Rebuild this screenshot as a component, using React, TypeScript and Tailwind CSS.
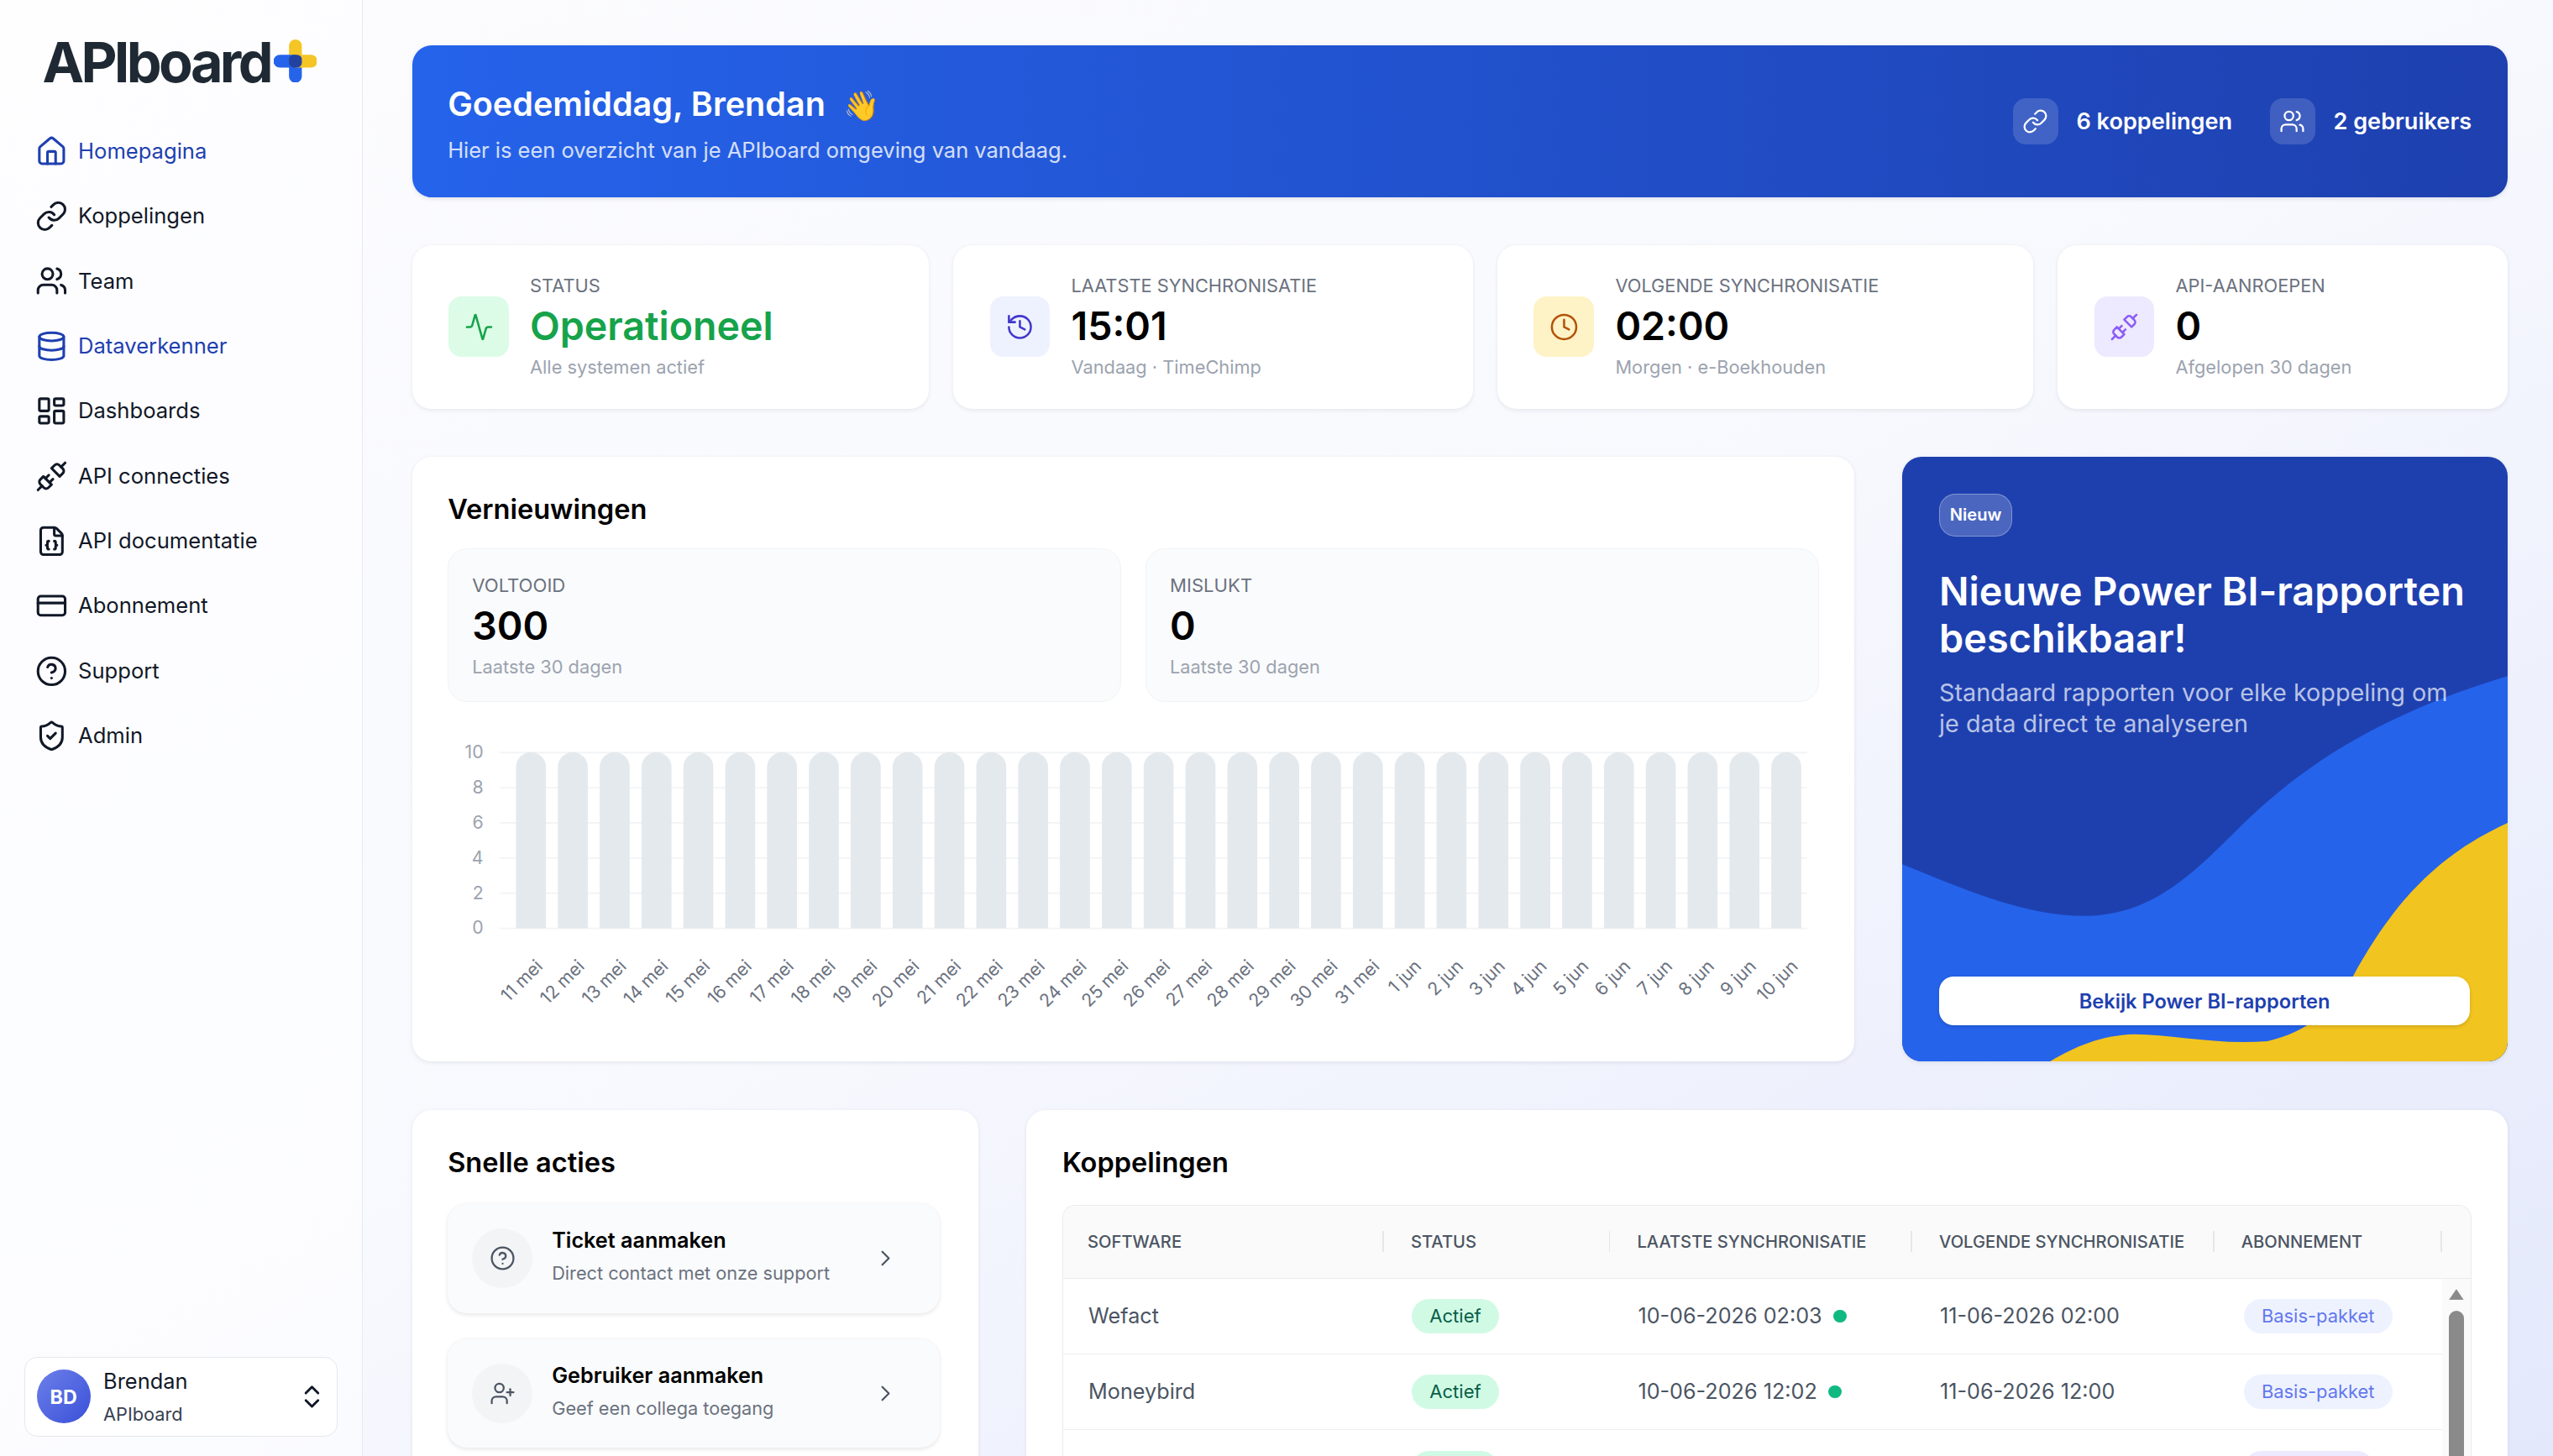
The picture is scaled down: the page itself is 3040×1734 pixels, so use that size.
import {
  Activity,
  ChevronRight,
  ChevronsUpDown,
  CircleHelp,
  Clock,
  CreditCard,
  Database,
  FileJson,
  History,
  House,
  LayoutDashboard,
  Link,
  ShieldCheck,
  Unplug,
  UserPlus,
  Users,
} from "lucide-react";

const navItems = [
  { label: "Homepagina", icon: House, active: true },
  { label: "Koppelingen", icon: Link },
  { label: "Team", icon: Users },
  { label: "Dataverkenner", icon: Database, active: true },
  { label: "Dashboards", icon: LayoutDashboard },
  { label: "API connecties", icon: Unplug },
  { label: "API documentatie", icon: FileJson },
  { label: "Abonnement", icon: CreditCard },
  { label: "Support", icon: CircleHelp },
  { label: "Admin", icon: ShieldCheck },
];

const days = [
  ...Array.from({ length: 21 }, (_, i) => `${i + 11} mei`),
  ...Array.from({ length: 10 }, (_, i) => `${i + 1} jun`),
];

const rows = [
  { name: "Wefact", last: "10-06-2026 02:03", next: "11-06-2026 02:00", plan: "Basis-pakket" },
  { name: "Moneybird", last: "10-06-2026 12:02", next: "11-06-2026 12:00", plan: "Basis-pakket" },
];

function Logo() {
  return (
    <div className="flex items-center h-[27px] ml-[26px] mt-6">
      <span className="pt-[1.5px] text-[34.3px] leading-none font-bold tracking-[-0.055em] text-[#1f2933]">APIboard</span>
      <svg viewBox="0 0 27 27" className="w-[26.6px] h-[26.6px] ml-[2px]">
        <path d="M9.5 13.5V4a4 4 0 0 1 8 0v9.5z" fill="#f4c524" />
        <path d="M9.5 13.5v9.5a4 4 0 0 0 8 0v-9.5z" fill="#2563eb" />
        <path d="M13.5 9.5H3.8a4 4 0 0 0 0 8h9.7z" fill="#2563eb" />
        <path d="M13.5 9.5h9.7a4 4 0 0 1 0 8h-9.7z" fill="#f4c524" />
        <rect x="9.5" y="9.5" width="8" height="8" rx="3" fill="#23429f" />
      </svg>
    </div>
  );
}

function Sidebar() {
  return (
    <aside className="w-[223px] shrink-0 h-full bg-white/50 border-r border-[#e8eaf0] flex flex-col">
      <Logo />
      <nav className="mt-[22px] flex flex-col">
        {navItems.map((item) => (
          <div
            key={item.label}
            className={`h-[39.9px] pl-[21.5px] flex items-center gap-[6.5px] text-[13.2px] ${item.active ? "text-[#1e40af]" : "text-[#111827]"}`}
          >
            <item.icon size={20} strokeWidth={1.9} />
            <span>{item.label}</span>
          </div>
        ))}
      </nav>
      <div className="mt-auto mx-[15px] mb-[12px] h-[49px] rounded-lg border border-[#e5e7eb] bg-white flex items-center pl-[7px] pr-[6.5px]">
        <div className="w-[33px] h-[33px] rounded-full bg-gradient-to-br from-[#6d7fe9] to-[#3b4fd8] text-white text-xs font-bold flex items-center justify-center">
          BD
        </div>
        <div className="ml-2 flex-1">
          <div className="pt-[2px] text-[13.1px] leading-5 text-[#111827]">Brendan</div>
          <div className="text-[11.2px] leading-5 text-[#374151]">APIboard</div>
        </div>
        <ChevronsUpDown size={18} className="text-[#111827]" />
      </div>
    </aside>
  );
}

const statCards = [
  { label: "STATUS", value: "Operationeel", sub: "Alle systemen actief", icon: Activity, box: "bg-[#dcfce7]", tint: "text-[#16a34a]", valueColor: "text-[#16a34a]" },
  { label: "LAATSTE SYNCHRONISATIE", value: "15:01", sub: "Vandaag · TimeChimp", icon: History, box: "bg-[#eef2ff]", tint: "text-[#4338ca]", valueColor: "text-black" },
  { label: "VOLGENDE SYNCHRONISATIE", value: "02:00", sub: "Morgen · e-Boekhouden", icon: Clock, box: "bg-[#fef3c7]", tint: "text-[#b45309]", valueColor: "text-black" },
  { label: "API-AANROEPEN", value: "0", sub: "Afgelopen 30 dagen", icon: Unplug, box: "bg-[#ede9fe]", tint: "text-[#8b5cf6]", valueColor: "text-black" },
];

function StatCard({ card }: { card: (typeof statCards)[number] }) {
  return (
    <div className="h-[100.5px] bg-white rounded-xl shadow-[0_1px_3px_rgba(17,24,39,0.08)] flex items-center pl-[22.5px]">
      <div className={`w-[37px] h-[37px] rounded-lg flex items-center justify-center ${card.box} ${card.tint}`}>
        <card.icon size={18} strokeWidth={1.75} />
      </div>
      <div className="ml-[13px]">
        <div className="text-[11.25px] leading-4 text-[#6b7280]">{card.label}</div>
        <div className={`text-2xl leading-[34px] font-semibold ${card.valueColor}`}>{card.value}</div>
        <div className="text-[11.25px] leading-4 text-[#9ca3af]">{card.sub}</div>
      </div>
    </div>
  );
}

function RenewalChart() {
  const top = 12.5;
  const step = 21.6;
  return (
    <svg viewBox="0 0 842 190" className="w-[842px] h-[190px] mt-[19px]">
      {[10, 8, 6, 4, 2, 0].map((tick, i) => (
        <g key={tick}>
          <line x1={32} x2={835} y1={top + i * step} y2={top + i * step} stroke="#f3f4f6" strokeWidth={1} />
          <text x={22} y={top + i * step + 3.5} textAnchor="end" fontSize={11} fill="#9ca3af">
            {tick}
          </text>
        </g>
      ))}
      {days.map((day, i) => {
        const x = 42 + i * 25.7;
        return (
          <g key={day}>
            <path d={`M${x} ${top + 108}V${top + 9}a9.2 9.2 0 0 1 18.4 0V${top + 108}z`} fill="#e4e9ed" />
            <text
              x={x + 17}
              y={top + 132}
              textAnchor="end"
              fontSize={11}
              fill="#6b7280"
              transform={`rotate(-45 ${x + 17} ${top + 132})`}
            >
              {day}
            </text>
          </g>
        );
      })}
    </svg>
  );
}

function PromoCard() {
  return (
    <div className="relative w-[372px] shrink-0 rounded-xl bg-[#1e40af] overflow-hidden shadow-[0_1px_3px_rgba(17,24,39,0.08)] px-[23px] pt-[23px] pb-[22px] flex flex-col">
      <svg viewBox="49 28 1411 1487" preserveAspectRatio="none" className="absolute inset-0 w-full h-full">
        <path d="M49 1030C180 1085 330 1157 470 1157C620 1157 710 1070 820 955C930 840 1100 680 1460 567L1460 1515L49 1515Z" fill="#2563eb" />
        <path d="M1460 928C1290 1010 1190 1130 1098 1308C1060 1380 1000 1440 900 1465C780 1475 680 1448 590 1448C510 1450 450 1480 393 1515L1460 1515Z" fill="#f2c41f" />
      </svg>
      <div className="relative flex flex-col h-full">
        <span className="self-start h-[26px] px-[6px] rounded-[10px] bg-white/20 border border-white/30 text-[10.4px] font-semibold text-white flex items-center">
          Nieuw
        </span>
        <h3 className="mt-[19px] text-[24.15px] leading-[29px] font-semibold text-white">Nieuwe Power BI-rapporten beschikbaar!</h3>
        <p className="mt-[10px] text-[14.85px] leading-[19px] text-white/70">
          Standaard rapporten voor elke koppeling om je data direct te analyseren
        </p>
        <button className="mt-auto h-[30px] rounded-[9px] bg-white text-[12.2px] font-semibold text-[#1e40af] shadow-sm">
          Bekijk Power BI-rapporten
        </button>
      </div>
    </div>
  );
}

function Metric({ label, value }: { label: string; value: string }) {
  return (
    <div className="h-[94px] rounded-xl bg-[#fafbfc] border border-[#f1f3f5] pl-[14.5px] pt-[14.5px]">
      <div className="text-[11.4px] leading-4 text-[#6b7280]">{label}</div>
      <div className="text-2xl leading-[34px] font-semibold text-black">{value}</div>
      <div className="text-[11.25px] leading-4 text-[#9ca3af]">Laatste 30 dagen</div>
    </div>
  );
}

function QuickAction({ title, sub, icon: Icon }: { title: string; sub: string; icon: typeof CircleHelp }) {
  return (
    <div className="h-[67px] rounded-xl bg-[#fafbfc] shadow-[0_1px_3px_rgba(17,24,39,0.1)] flex items-center pl-[15px] pr-[25px]">
      <div className="w-[37px] h-[37px] rounded-full bg-[#f3f4f6] flex items-center justify-center text-[#4b5563]">
        <Icon size={16} strokeWidth={1.75} />
      </div>
      <div className="ml-[12px] flex-1 pb-[2px]">
        <div className="text-[13px] leading-5 font-semibold text-black">{title}</div>
        <div className="text-[11.2px] leading-5 text-[#6b7280]">{sub}</div>
      </div>
      <ChevronRight size={16} strokeWidth={1.75} className="text-[#4b5563]" />
    </div>
  );
}

const headers = ["SOFTWARE", "STATUS", "LAATSTE SYNCHRONISATIE", "VOLGENDE SYNCHRONISATIE", "ABONNEMENT"];

function ConnectionsTable() {
  return (
    <div className="mt-[14px] rounded-t-lg border border-b-0 border-[#e9ebee] overflow-hidden">
      <div className="grid grid-cols-[197px_139px_185.5px_185.5px_140px] h-[45px] bg-[#fafafa] border-b border-[#e9ebee]">
        {headers.map((h, i) => (
          <div key={h} className={`flex items-center ${i === 0 ? "pl-[15px]" : "pl-[16.5px]"}`}>
            <span className="flex-1 text-[10.4px] font-medium text-[#4b5563]">{h}</span>
            <span className="w-px h-[13px] bg-[#e5e7eb]" />
          </div>
        ))}
      </div>
      <div className="flex">
        <div className="w-[847px] shrink-0">
          {rows.map((r) => (
            <div key={r.name} className="grid grid-cols-[197px_139px_185.5px_185.5px_140px] h-[46.5px] items-center border-b border-[#eceef1] text-[13px] text-[#4b5563]">
              <div className="pl-[15.5px]">{r.name}</div>
              <div className="pl-[17px]">
                <span className="inline-flex items-center h-[21px] px-[11px] rounded-full bg-[#d1fae5] text-[#065f46] text-[11.4px]">Actief</span>
              </div>
              <div className="pl-[17px] flex items-center gap-[7px]">
                {r.last}
                <span className="w-2 h-2 rounded-full bg-[#10b981]" />
              </div>
              <div className="pl-[17px]">{r.next}</div>
              <div className="pl-[18px]">
                <span className="inline-flex items-center h-[21px] px-[11px] rounded-full bg-[#eef2ff] text-[#6378ee] text-[11.3px]">{r.plan}</span>
              </div>
            </div>
          ))}
          {/* next row only peeks in at the fold */}
          <div className="grid grid-cols-[197px_139px_185.5px_185.5px_140px] h-[46.5px] items-center">
            <div />
            <div className="pl-[17px]">
              <span className="block w-[53px] h-[21px] rounded-full bg-[#d1fae5]" />
            </div>
            <div />
            <div />
            <div className="pl-[18px]">
              <span className="block w-[80px] h-[21px] rounded-full bg-[#ede9fe]" />
            </div>
          </div>
        </div>
        <div className="flex-1 bg-[#fafafa] flex flex-col items-center pt-[6px]">
          <svg viewBox="0 0 10 8" className="w-[9.2px] h-[7px]">
            <path d="M5 0.5L9.8 7.5H0.2z" fill="#8a8a8a" stroke="#8a8a8a" strokeWidth={0.5} strokeLinejoin="round" />
          </svg>
          <div className="mt-[6.8px] w-[9.2px] h-[200px] rounded-t-full bg-[#8a8a8a]" />
        </div>
      </div>
    </div>
  );
}

export default function App() {
  return (
    <div className="[zoom:1.93878] w-[1568px] h-[894.4px] overflow-hidden flex bg-gradient-to-br from-[#fcfcfe] via-[#f8f9fe] to-[#e3e8fb] font-['Inter',sans-serif]">
      <Sidebar />
      <main className="flex-1 min-w-0 pl-[30px] pr-[28px] pt-[28px]">
        <section className="h-[93px] rounded-xl bg-gradient-to-r from-[#2563eb] to-[#1e40af] flex items-center px-[22px] text-white shadow-[0_1px_3px_rgba(17,24,39,0.1)]">
          <div className="flex-1 pt-1">
            <h1 className="text-[20.4px] leading-7 font-semibold">
              Goedemiddag, Brendan <span className="ml-[6px] text-[18px]">👋</span>
            </h1>
            <p className="mt-1 text-[13.14px] leading-5 text-white/80">Hier is een overzicht van je APIboard omgeving van vandaag.</p>
          </div>
          <div className="flex items-center gap-[23px] text-sm font-semibold">
            <div className="flex items-center gap-[11px]">
              <span className="w-7 h-7 rounded-lg bg-white/15 flex items-center justify-center">
                <Link size={16} strokeWidth={1.75} />
              </span>
              <span className="pt-[1px]">6 koppelingen</span>
            </div>
            <div className="flex items-center gap-[11px]">
              <span className="w-7 h-7 rounded-lg bg-white/15 flex items-center justify-center">
                <Users size={16} strokeWidth={1.75} />
              </span>
              <span className="pt-[1px]">2 gebruikers</span>
            </div>
          </div>
        </section>

        <section className="mt-[29.5px] grid grid-cols-[317.4px_319.2px_329.1px_276.3px] gap-[15px]">
          {statCards.map((c) => (
            <StatCard key={c.label} card={c} />
          ))}
        </section>

        <section className="mt-[29.5px] flex gap-[29px] h-[371.5px]">
          <div className="flex-1 rounded-xl bg-white shadow-[0_1px_3px_rgba(17,24,39,0.08)] px-[22px] pt-[20px]">
            <h2 className="text-[16.8px] leading-6 font-semibold text-black">Vernieuwingen</h2>
            <div className="mt-[12.5px] grid grid-cols-2 gap-[15px]">
              <Metric label="VOLTOOID" value="300" />
              <Metric label="MISLUKT" value="0" />
            </div>
            <RenewalChart />
          </div>
          <PromoCard />
        </section>

        <section className="mt-[30px] flex gap-[29.5px]">
          <div className="w-[348px] shrink-0 h-[400px] rounded-xl bg-white shadow-[0_1px_3px_rgba(17,24,39,0.08)] pl-[22px] pr-[24px] pt-[20px]">
            <h2 className="text-[16.8px] leading-6 font-semibold text-black">Snelle acties</h2>
            <div className="mt-[13.5px] flex flex-col gap-4">
              <QuickAction title="Ticket aanmaken" sub="Direct contact met onze support" icon={CircleHelp} />
              <QuickAction title="Gebruiker aanmaken" sub="Geef een collega toegang" icon={UserPlus} />
            </div>
          </div>
          <div className="flex-1 h-[400px] rounded-xl bg-white shadow-[0_1px_3px_rgba(17,24,39,0.08)] px-[22px] pt-[20px]">
            <h2 className="text-[16.8px] leading-6 font-semibold text-black">Koppelingen</h2>
            <ConnectionsTable />
          </div>
        </section>
      </main>
    </div>
  );
}
